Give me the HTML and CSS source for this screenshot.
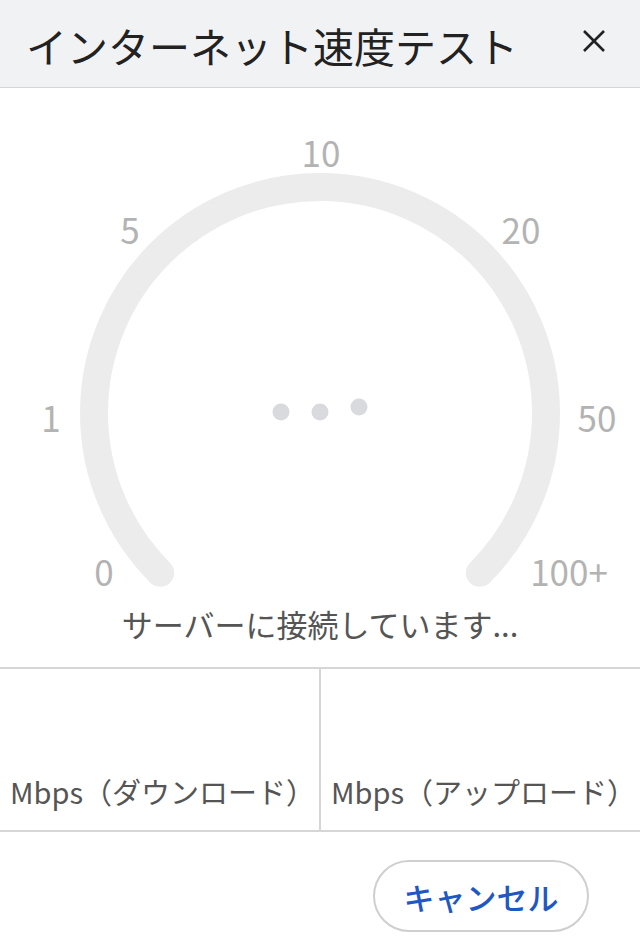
FILE: index.html
```html
<!DOCTYPE html>
<html lang="ja">
<head>
  <meta charset="UTF-8" />
  <meta name="viewport" content="width=device-width, initial-scale=1.0"/>
  <title>インターネット速度テスト</title>
  <link rel="stylesheet" href="styles.css">
</head>
<body>
  <div class="dialog">
    <header class="dialog-header">
      <h1>インターネット速度テスト</h1>
      <button class="close-btn" aria-label="閉じる">
        <svg width="24" height="24" viewBox="0 0 24 24">
          <path d="M2 2 L22 22 M22 2 L2 22" stroke="#222" stroke-width="2.6" fill="none"/>
        </svg>
      </button>
    </header>

    <div class="gauge">
      <svg viewBox="0 0 640 511" width="640" height="511">
        <path d="M160.2 484.8 A226 226 0 1 1 479.8 484.8" stroke="#ececec" stroke-width="28" stroke-linecap="round" fill="none"/>
        <g class="gauge-labels">
          <text x="321" y="63">10</text>
          <text x="130" y="140">5</text>
          <text x="521" y="140">20</text>
          <text x="51" y="328">1</text>
          <text x="597" y="328">50</text>
          <text x="104" y="482">0</text>
          <text x="569" y="482">100+</text>
        </g>
        <g fill="#d9dadd">
          <circle cx="281" cy="324" r="8.5"/>
          <circle cx="320" cy="324" r="8.5"/>
          <circle cx="359" cy="319" r="8.5"/>
        </g>
      </svg>
    </div>

    <p class="status">サーバーに接続しています...</p>

    <div class="stats">
      <div class="stat"><span class="stat-unit">Mbps（ダウンロード）</span></div>
      <div class="stat"><span class="stat-unit">Mbps（アップロード）</span></div>
    </div>

    <div class="actions">
      <button class="cancel-btn">キャンセル</button>
    </div>
  </div>
</body>
</html>
```

FILE: styles.css
```css
body {
  margin: 0;
  padding: 0;
  background-color: #ffffff;
  font-family: "Noto Sans CJK JP", "Noto Sans", sans-serif;
}

.dialog {
  width: 640px;
  min-height: 947px;
  background: #ffffff;
}

.dialog-header {
  height: 88px;
  box-sizing: border-box;
  display: flex;
  align-items: center;
  justify-content: space-between;
  padding: 4px 34px 0 26px;
  background-color: #f1f2f4;
  border-bottom: 1px solid #d6d6d8;
}

h1 {
  margin: 0;
  font-size: 41px;
  font-weight: 400;
  color: #222;
  line-height: 1;
}

.close-btn {
  border: none;
  background: none;
  padding: 0;
  width: 24px;
  height: 24px;
  cursor: pointer;
  margin-top: -10px;
}

.gauge {
  height: 511px;
}

.gauge svg {
  display: block;
}

.gauge-labels text {
  font-family: "Noto Sans CJK JP", "Noto Sans", sans-serif;
  font-size: 35px;
  fill: #b3b3b3;
  text-anchor: middle;
  dominant-baseline: central;
}

.status {
  margin: 0 0 18px;
  height: 50px;
  line-height: 50px;
  text-align: center;
  font-size: 31px;
  color: #555;
}

.stats {
  display: flex;
  height: 165px;
  box-sizing: border-box;
  border-top: 2px solid #d6d6d6;
  border-bottom: 2px solid #d6d6d6;
}

.stat {
  flex: 1;
  display: flex;
  align-items: flex-end;
  padding: 0 0 19px 10px;
}

.stat + .stat {
  border-left: 2px solid #d6d6d6;
}

.stat-unit {
  font-size: 29px;
  line-height: 40px;
  color: #555;
  white-space: nowrap;
}

.actions {
  display: flex;
  justify-content: flex-end;
  padding: 28px 51px 0 0;
}

.cancel-btn {
  width: 216px;
  height: 72px;
  border: 2px solid #cfcfcf;
  border-radius: 36px;
  background: #ffffff;
  color: #1f57c3;
  font-family: "Noto Sans CJK JP", "Noto Sans", sans-serif;
  font-size: 31px;
  font-weight: 500;
  cursor: pointer;
}
```
